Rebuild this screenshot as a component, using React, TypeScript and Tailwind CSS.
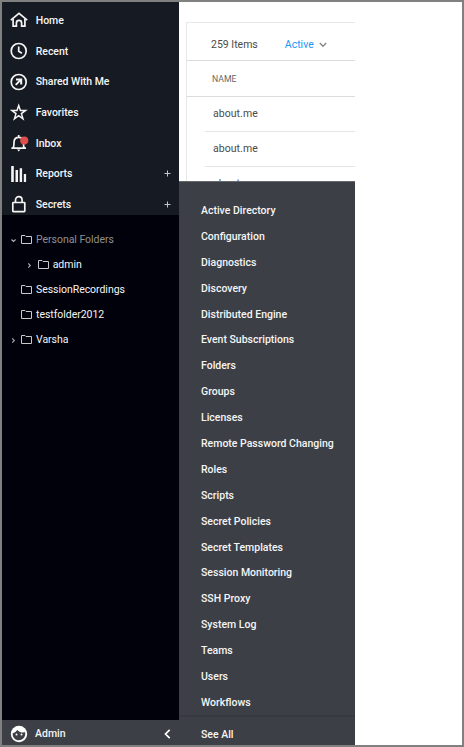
import React from "react";

const line = {
  fill: "none",
  stroke: "currentColor",
  strokeWidth: 1.7,
} as const;

function HomeIcon() {
  return (
    <svg width="18" height="18" viewBox="0 0 18 18" {...line}>
      <path d="M0.8 9.2 9 2.3l8.2 6.9" />
      <path d="M3.1 8v7.1h3.3v-3.2a2.6 2.6 0 0 1 5.2 0v3.2h3.3V8" />
    </svg>
  );
}

function ClockIcon() {
  return (
    <svg width="18" height="18" viewBox="0 0 18 18" {...line}>
      <circle cx="8.7" cy="9" r="7.5" />
      <path d="M8.7 4.6V9.3l3.2 2" />
    </svg>
  );
}

function SharedIcon() {
  return (
    <svg width="18" height="18" viewBox="0 0 18 18" {...line}>
      <circle cx="8.7" cy="9" r="7.5" />
      <path d="M6 6.4h5.2v5.2M11 6.6 5.7 11.9" strokeWidth="2" />
    </svg>
  );
}

function StarIcon() {
  return (
    <svg width="18" height="18" viewBox="0 0 18 18" {...line} strokeWidth={1.5}>
      <path d="m8.700 2.500 1.700 4.900h5.200l-4.200 3.200 1.600 5.200L8.700 12.700l-4.300 3.100 1.600-5.200L1.800 7.400h5.200z" />
    </svg>
  );
}

function BellIcon() {
  return (
    <svg className="overflow-visible" width="18" height="18" viewBox="0 0 18 18" {...line}>
      <path d="M1.4 14.2H16M2.9 14c1.4-1.4 1-3.4 1.1-6 .2-3 2-4.7 4.7-4.7s4.5 1.7 4.7 4.7c.1 2.6-.3 4.6 1.1 6M8.700 1v2.2" />
      <path d="M6.9 15.6h3.6L8.700 17.4z" fill="currentColor" stroke="none" />
      <circle cx="14.2" cy="6.6" r="4.1" fill="#dc4f4c" stroke="none" />
    </svg>
  );
}

function BarsIcon() {
  return (
    <svg width="18" height="18" viewBox="0 0 18 18" fill="currentColor">
      <path d="M1.2 1h2.6v16H1.2zM5.5 5h2.5v12H5.5zM9.7 3.2h2.4V17H9.7zM13.8 9h2.3v8h-2.3z" />
    </svg>
  );
}

function LockIcon() {
  return (
    <svg width="18" height="18" viewBox="0 0 18 18" {...line}>
      <rect x="2.8" y="7.5" width="12" height="9.1" rx="0.6" />
      <path d="M5.5 7.5V5.3c0-4.8 6.6-4.8 6.6 0v2.2" />
    </svg>
  );
}

function FaceIcon() {
  return (
    <svg width="18" height="18" viewBox="0 0 18 18">
      <circle cx="9" cy="9" r="8.2" fill="#fff" />
      <path
        d="M2.7 8.2C4.7 7.7 6.3 6.5 7.2 4.9c2 2.1 4.8 2.9 7.9 2.4.9 4-2 8-6.1 8-3.8 0-6.800-3.2-6.3-7.1z"
        fill="#3c3f46"
      />
      <circle cx="6.5" cy="9.5" r="1" fill="#fff" />
      <circle cx="11.5" cy="9.5" r="1" fill="#fff" />
    </svg>
  );
}

function FolderIcon() {
  return (
    <svg width="11" height="9" viewBox="0 0 11 9" fill="none" stroke="#c9c9cb">
      <path d="M.5.5h3.500l1 1h5.500v7H.5z" />
    </svg>
  );
}

function Chevron({ open }: { open?: boolean }) {
  return (
    <svg className="mt-[1px]" width="5" height="5" viewBox="0 0 5 5" fill="none" stroke="#b0b0b4" strokeWidth="1.100">
      <path d={open ? "M.4 1.500l2.100 2 2.100-2" : "M1.300.4l2 2.100-2 2.100"} />
    </svg>
  );
}

const nav = [
  { label: "Home", Icon: HomeIcon },
  { label: "Recent", Icon: ClockIcon },
  { label: "Shared With Me", Icon: SharedIcon },
  { label: "Favorites", Icon: StarIcon },
  { label: "Inbox", Icon: BellIcon },
  { label: "Reports", Icon: BarsIcon, add: true },
  { label: "Secrets", Icon: LockIcon, add: true },
];

const menu = [
  "Active Directory", "Configuration", "Diagnostics", "Discovery",
  "Distributed Engine", "Event Subscriptions", "Folders", "Groups",
  "Licenses", "Remote Password Changing", "Roles", "Scripts",
  "Secret Policies", "Secret Templates", "Session Monitoring", "SSH Proxy",
  "System Log", "Teams", "Users", "Workflows",
];

function Sidebar() {
  return (
    <aside className="flex w-[177px] shrink-0 flex-col bg-[#01010b] text-[#f5f5f5]">
      <nav className="flex h-[213px] flex-col bg-[#161a23] pt-[3px]">
        {nav.map(({ label, Icon, add }) => (
          <div key={label} className="flex h-[30.7px] shrink-0 items-center pl-[7.6px] pr-[7px] font-medium">
            <Icon />
            <span className="ml-[8.2px] grow pt-[1px] tracking-[-0.05px]">{label}</span>
            {add && (
              <svg width="9" height="9" viewBox="0 0 9 9" stroke="#c5c6c8">
                <path d="M4.500 1.500v6M1.500 4.500h6" />
              </svg>
            )}
          </div>
        ))}
      </nav>
      <div className="flex grow flex-col pt-[12px] tracking-[-0.04px]">
        <div className="flex h-[25px] items-center pl-[9px] text-[#909090]">
          <Chevron open />
          <span className="ml-[5px] mr-[4px]"><FolderIcon /></span>Personal Folders
        </div>
        <div className="flex h-[25px] items-center pl-[25px]">
          <Chevron />
          <span className="ml-[6px] mr-[3.7px]"><FolderIcon /></span>admin
        </div>
        <div className="flex h-[25px] items-center pl-[19px]">
          <span className="mr-[4px]"><FolderIcon /></span>SessionRecordings
        </div>
        <div className="flex h-[25px] items-center pl-[19px]">
          <span className="mr-[4px]"><FolderIcon /></span>testfolder2012
        </div>
        <div className="flex h-[25px] items-center pl-[9px]">
          <Chevron />
          <span className="ml-[5px] mr-[4px]"><FolderIcon /></span>Varsha
        </div>
      </div>
      <div className="flex h-[25.500px] items-center bg-[#3c3f46] pl-2 pr-[8px] pt-[3px] font-medium">
        <FaceIcon />
        <span className="ml-[7px] grow">Admin</span>
        <svg width="7" height="10" viewBox="0 0 7 10" fill="none" stroke="#fff" strokeWidth="1.700">
          <path d="M5.700.8 1.500 5l4.200 4.200" />
        </svg>
      </div>
    </aside>
  );
}

function ItemList() {
  return (
    <section className="h-[179px] overflow-hidden pl-[7px] pt-[20px] text-[#4a4a4a]">
      <div className="h-[200px] border-l border-t border-[#e8e8e8]">
        <div className="flex h-[38px] items-center border-b border-[#dcdcdc] pl-[24px] pt-[6px]">
          259 Items
          <span className="ml-[27px] text-[#2196f3]">Active</span>
          <svg className="ml-[5px]" width="8" height="6" viewBox="0 0 8 6" fill="none" stroke="#858585" strokeWidth="1.300">
            <path d="M.8 1 4 4.300 7.200 1" />
          </svg>
        </div>
        <div className="flex h-[36px] items-center border-b border-[#dcdcdc] pl-[25px] text-[8.700px] text-[#666]">
          NAME
        </div>
        <div className="ml-[18px]">
          {[0, 1, 2].map((n) => (
            <div key={n} className="flex h-[35px] items-center border-b border-[#e3e6e6] pl-[8px] tracking-[0.05px]">
              about.me
            </div>
          ))}
        </div>
      </div>
    </section>
  );
}

export default function App() {
  return (
    <main
      className="flex h-[747px] w-[464px] overflow-hidden border-2 border-[#808080] bg-white text-[10.5px] leading-[14px]"
      style={{ fontFamily: 'Roboto, "Liberation Sans", sans-serif' }}
    >
      <Sidebar />
      <div className="flex w-[176px] shrink-0 flex-col">
        <ItemList />
        <div className="flex grow flex-col border-t border-[#66696c] bg-[#3c3f46] pt-[16px] font-medium text-[#f5f5f5]">
          <div className="flex h-[516.6px] shrink-0 flex-col">
            {menu.map((item) => (
              <div key={item} className="flex h-[25.9px] shrink-0 items-center pl-[22px]">{item}</div>
            ))}
          </div>
          <div className="flex grow items-center border-t-2 border-[#363940] pl-[22px] pt-[8px]">
            See All
          </div>
        </div>
      </div>
    </main>
  );
}
